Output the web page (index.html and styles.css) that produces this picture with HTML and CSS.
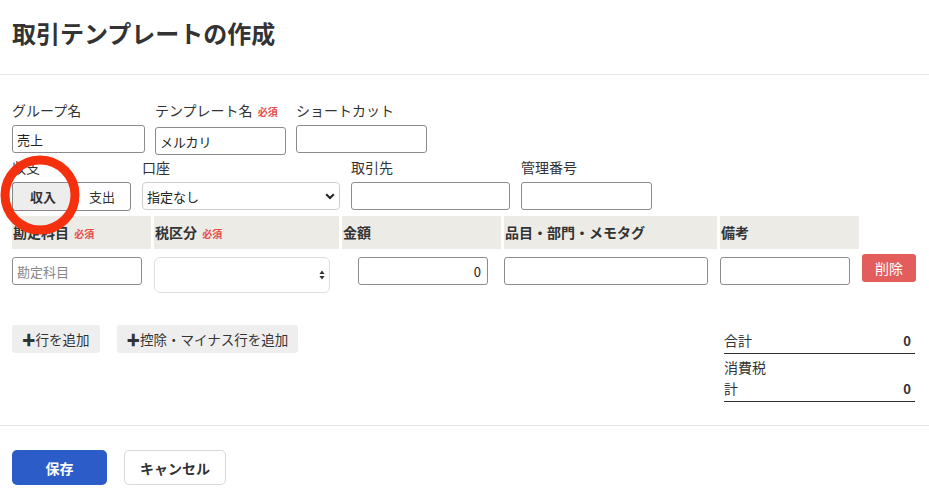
FILE: index.html
```html
<!DOCTYPE html>
<html lang="ja">
<head>
    <meta charset="UTF-8">
    <title>取引テンプレートの作成</title>
    <link rel="stylesheet" href="styles.css">
</head>
<body>
    <header class="page-head">
        <h1>取引テンプレートの作成</h1>
    </header>

    <main class="form">
        <div class="form-row">
            <div class="field w133">
                <label>グループ名</label>
                <input class="text" type="text" value="売上">
            </div>
            <div class="field w131">
                <label>テンプレート名 <span class="req">必須</span></label>
                <input class="text" type="text" value="メルカリ">
            </div>
            <div class="field w131">
                <label>ショートカット</label>
                <input class="text" type="text">
            </div>
        </div>

        <div class="form-row row2">
            <div class="field">
                <label>収支</label>
                <div class="toggle">
                    <button class="toggle-btn active">収入</button>
                    <button class="toggle-btn">支出</button>
                </div>
            </div>
            <div class="field w198">
                <label>口座</label>
                <div class="select-wrap">
                    <select class="select"><option>指定なし</option></select>
                    <svg class="chev" width="10" height="7" viewBox="0 0 10 7"><path d="M1.2 1.2 L5 5 L8.8 1.2" fill="none" stroke="#222" stroke-width="2"/></svg>
                </div>
            </div>
            <div class="field w159">
                <label>取引先</label>
                <input class="text" type="text">
            </div>
            <div class="field w131">
                <label>管理番号</label>
                <input class="text" type="text">
            </div>
        </div>

        <div class="lines">
            <div class="th">勘定科目 <span class="req">必須</span></div>
            <div class="th">税区分 <span class="req">必須</span></div>
            <div class="th">金額</div>
            <div class="th">品目・部門・メモタグ</div>
            <div class="th">備考</div>
            <div></div>

            <div class="td"><input class="text w130" type="text" placeholder="勘定科目"></div>
            <div class="td">
                <div class="select-wrap tax">
                    <select class="select tall"><option></option></select>
                    <svg class="updown" width="6" height="10" viewBox="0 0 6 10"><path d="M3 0.5 L5.6 4 H0.4 Z M3 9.5 L5.6 6 H0.4 Z" fill="#333"/></svg>
                </div>
            </div>
            <div class="td amount"><input class="text w130 num" type="text" value="0"></div>
            <div class="td"><input class="text w204" type="text"></div>
            <div class="td"><input class="text w130" type="text"></div>
            <div class="td"><button class="del">削除</button></div>
        </div>

        <div class="bottom">
            <div class="adds">
                <button class="add">✚行を追加</button>
                <button class="add">✚控除・マイナス行を追加</button>
            </div>
            <div class="totals">
                <div class="total-row">
                    <span>合計</span><b>0</b>
                </div>
                <div class="total-row">
                    <span class="narrow">消費税計</span><b>0</b>
                </div>
            </div>
        </div>
    </main>

    <footer class="page-foot">
        <button class="save">保存</button>
        <button class="cancel">キャンセル</button>
    </footer>

    <svg class="mark" width="82" height="82" viewBox="0 0 82 82"><circle cx="41" cy="41" r="35" fill="none" stroke="#f5300e" stroke-width="9"/></svg>
</body>
</html>
```

FILE: styles.css
```css
body {
    margin: 0;
    background: #fff;
    color: #333;
    font-family: "Noto Sans CJK JP", "Noto Sans", sans-serif;
    font-size: 14px;
    position: relative;
}

.page-head {
    border-bottom: 1px solid #e6e6e6;
    padding: 15px 12px 23px;
}

.page-head h1 {
    margin: 0;
    font-size: 24px;
    line-height: 36px;
    font-weight: bold;
    color: #333;
}

.form {
    padding: 25px 12px 0;
}

.form-row {
    display: flex;
    gap: 10px;
}

.row2 {
    margin-top: 2px;
    gap: 11px;
}

.field {
    display: flex;
    flex-direction: column;
}

.field label {
    line-height: 20px;
    margin-bottom: 5px;
    white-space: nowrap;
}

.req {
    color: #e64d4d;
    font-size: 10px;
    font-weight: bold;
    margin-left: 2px;
}

.w133 { width: 133px; }
.w131 { width: 131px; }
.w198 { width: 198px; }
.w159 { width: 159px; }
.w130 { width: 130px; }
.w204 { width: 204px; }

.text {
    box-sizing: border-box;
    height: 28px;
    border: 1px solid #8c8c8c;
    border-radius: 3px;
    padding: 0 4px;
    font-family: inherit;
    font-size: 13px;
    color: #222;
    width: 100%;
    outline: none;
}

.td .text.w130 { width: 130px; }
.td .text.w204 { width: 204px; }

.text::placeholder {
    color: #888;
}

.num {
    text-align: right;
    padding-right: 6px;
}

.toggle {
    display: flex;
    height: 29px;
}

.toggle-btn {
    font-family: inherit;
    font-size: 13px;
    color: #333;
    background: #fff;
    border: 1px solid #888;
    border-radius: 0 3px 3px 0;
    width: 58px;
    padding: 0;
}

.toggle-btn.active {
    width: 61px;
    background: #ededed;
    font-weight: bold;
    border-radius: 3px 0 0 3px;
    border-right: none;
}

.select-wrap {
    position: relative;
}

.select {
    appearance: none;
    -webkit-appearance: none;
    box-sizing: border-box;
    width: 100%;
    height: 28px;
    border: 1px solid #cfcfcf;
    border-radius: 4px;
    background: #fff;
    font-family: inherit;
    font-size: 13px;
    color: #222;
    padding: 0 4px;
}

.chev {
    position: absolute;
    right: 5px;
    top: 11px;
}

.tax {
    width: 176px;
}

.select.tall {
    height: 36px;
    border-color: #dedede;
    border-radius: 6px;
}

.updown {
    position: absolute;
    right: 5px;
    top: 13px;
}

.lines {
    display: grid;
    grid-template-columns: 139px 185px 159px 213px 139px 60px;
    column-gap: 3px;
    margin-top: 5px;
}

.th {
    background: #edebe6;
    height: 33px;
    line-height: 33px;
    font-weight: bold;
    padding-left: 1px;
    white-space: nowrap;
}

.td {
    padding-top: 8px;
}

.amount {
    padding-left: 16px;
}

.del {
    margin-top: -3px;
    width: 54px;
    height: 28px;
    border: none;
    border-radius: 3px;
    background: #e45d5d;
    color: #fff;
    font-family: inherit;
    font-size: 14px;
    padding: 0;
}

.bottom {
    display: flex;
    justify-content: space-between;
    align-items: flex-start;
    margin-top: 32px;
    padding-right: 2px;
}

.adds {
    display: flex;
    gap: 17px;
}

.add {
    height: 28px;
    border: none;
    border-radius: 3px;
    background: #eeeeee;
    font-family: inherit;
    font-size: 13.5px;
    color: #333;
    padding: 0 10px;
}

.totals {
    width: 191px;
    margin-top: 5px;
}

.total-row {
    display: flex;
    justify-content: space-between;
    align-items: flex-end;
    border-bottom: 1px solid #333;
    line-height: 21px;
    padding: 0 4px 2px 0;
}

.total-row + .total-row {
    padding-top: 3px;
    padding-bottom: 2px;
}

.total-row b {
    font-size: 13px;
}

.narrow {
    width: 44px;
}

.page-foot {
    border-top: 1px solid #e6e6e6;
    margin-top: 23px;
    padding: 24px 12px 14px;
    display: flex;
    gap: 17px;
}

.save {
    width: 95px;
    height: 35px;
    border: none;
    border-radius: 5px;
    background: #2b5cc8;
    color: #fff;
    font-family: inherit;
    font-weight: bold;
    font-size: 14px;
}

.cancel {
    width: 102px;
    height: 35px;
    border: 1px solid #d9d9d9;
    border-radius: 5px;
    background: #fff;
    color: #333;
    font-family: inherit;
    font-weight: bold;
    font-size: 14px;
}

.mark {
    position: absolute;
    left: -1px;
    top: 154px;
}
```
